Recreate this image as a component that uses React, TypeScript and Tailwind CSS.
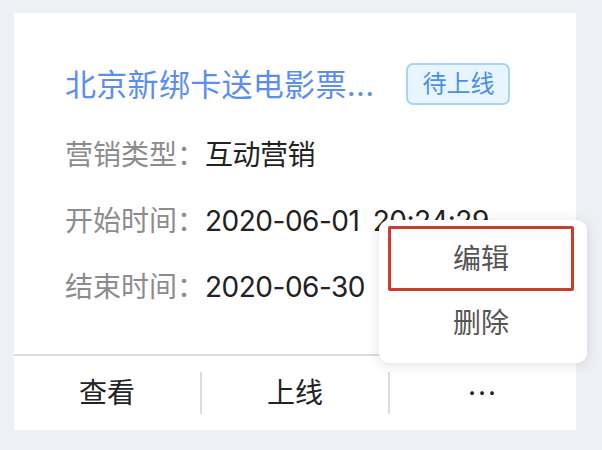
const font = "font-['Inter','Noto_Sans_CJK_SC',sans-serif]";

const rows = [
  { label: '营销类型：', value: '互动营销' },
  { label: '开始时间：', value: '2020-06-01 20:24:29' },
  { label: '结束时间：', value: '2020-06-30 23:59:59' },
];

export default function App() {
  return (
    <div className={`w-[602px] h-[450px] bg-[#eef0f5] pt-[13px] pl-[14px] ${font}`}>
      <div className="relative w-[562px] h-[417px] bg-white">
        {/* Card body */}
        <div className="pt-[50px] px-[51px] pb-[34px]">
          <div className="flex items-center h-[42px]">
            <span className="text-[31px] leading-none text-[#5b8ef0] whitespace-nowrap tracking-[0.3px]">
              北京新绑卡送电影票...
            </span>
            <span className="ml-[32px] shrink-0 whitespace-nowrap h-[42px] px-[14px] flex items-center rounded-[7px] border-2 border-[#a6d4fa] bg-[#e8f5ff] text-[24px] text-[#4a90e8]">
              待上线
            </span>
          </div>
          <div className="mt-[17px]">
            {rows.map(row => (
              <div key={row.label} className="flex items-center h-[66px] text-[28px] whitespace-nowrap">
                <span className="text-[#8c8c8c]">{row.label}</span>
                <span className="text-[#222222] tracking-[-0.5px] [word-spacing:6px]">{row.value}</span>
              </div>
            ))}
          </div>
        </div>

        <div className="h-[2px] bg-[#dcdcdc]" />

        {/* Actions */}
        <div className="flex items-center h-[74px] text-[28px] text-[#222222]">
          <div className="flex-1 text-center">查看</div>
          <div className="w-[2px] h-[42px] bg-[#dcdcdc]" />
          <div className="flex-1 text-center">上线</div>
          <div className="w-[2px] h-[42px] bg-[#dcdcdc]" />
          <div className="flex-1 text-center tracking-[2px]">···</div>
        </div>

        {/* Dropdown menu */}
        <div className="absolute left-[365px] top-[207px] w-[208px] h-[143px] bg-white rounded-[10px] shadow-[0_2px_14px_rgba(0,0,0,0.12)] pt-[6px] pl-[9px] pr-[13px]">
          <div className="h-[65px] flex items-center justify-center border-[3px] border-[#cc3b2b] rounded-[2px] text-[28px] text-[#555555]">
            编辑
          </div>
          <div className="h-[64px] flex items-center justify-center text-[28px] text-[#555555]">
            删除
          </div>
        </div>
      </div>
    </div>
  );
}
